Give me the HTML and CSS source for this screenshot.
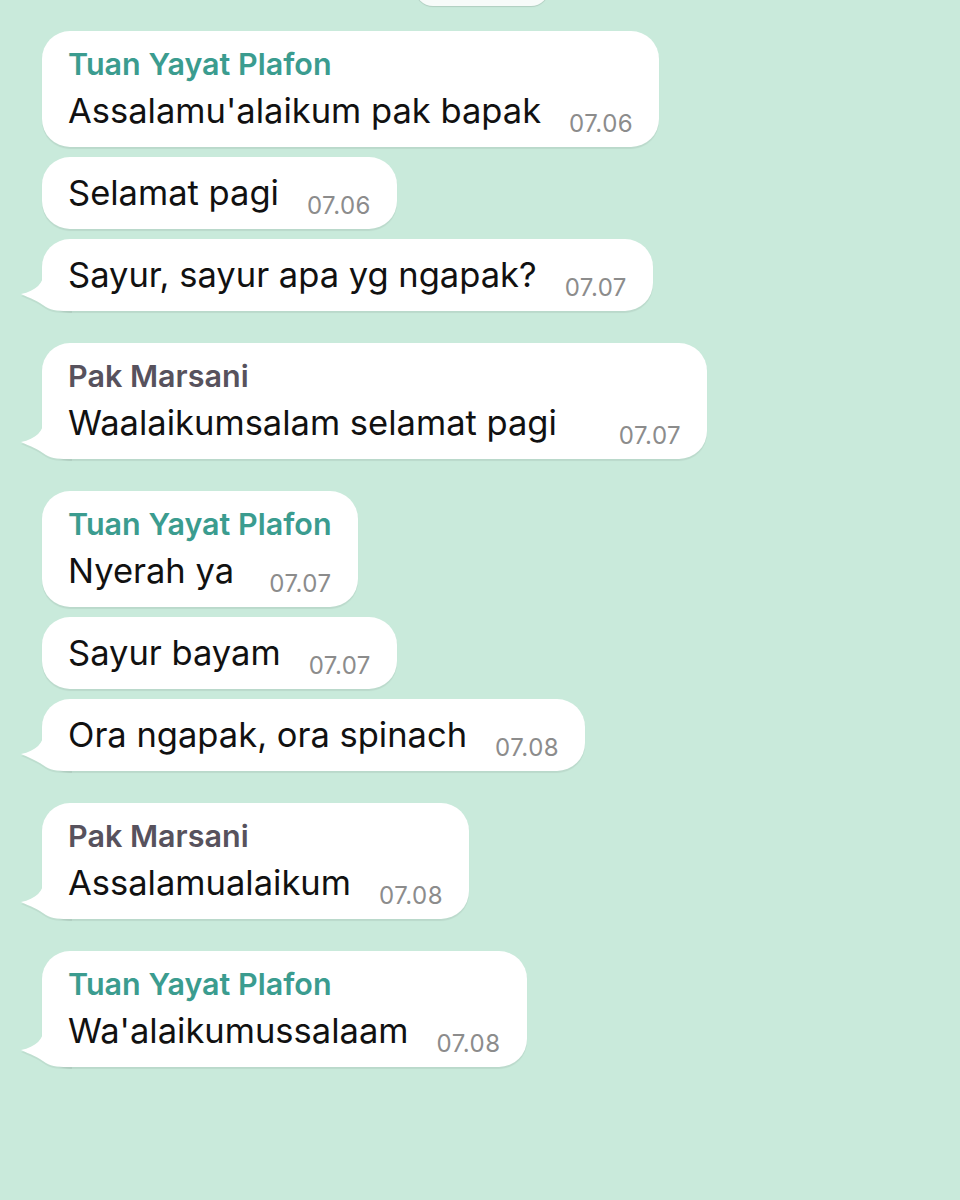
FILE: index.html
```html
<!DOCTYPE html>
<html>
  <head>
    <title>Chat</title>
    <link rel="stylesheet" href="styles.css">
  </head>
  <body>
    <div class="chat">
      <div class="date-pill"></div>

      <div class="group">
        <div class="bubble">
          <div class="name name-teal">Tuan Yayat Plafon</div>
          <div class="line"><span class="text">Assalamu'alaikum pak bapak</span><span class="time">07.06</span></div>
        </div>
        <div class="bubble">
          <div class="line"><span class="text">Selamat pagi</span><span class="time">07.06</span></div>
        </div>
        <div class="bubble tail">
          <svg class="tail-icon" width="52" height="40" viewBox="0 0 52 40"><path d="M24 0 C24 12 16 20 1 23 C10 27 18 30 26 36 C32 40 40 40 52 40 L52 0 Z" fill="#fff"/></svg>
          <div class="line"><span class="text">Sayur, sayur apa yg ngapak?</span><span class="time">07.07</span></div>
        </div>
      </div>

      <div class="group">
        <div class="bubble tail">
          <svg class="tail-icon" width="52" height="40" viewBox="0 0 52 40"><path d="M24 0 C24 12 16 20 1 23 C10 27 18 30 26 36 C32 40 40 40 52 40 L52 0 Z" fill="#fff"/></svg>
          <div class="name name-grey">Pak Marsani</div>
          <div class="line line-wide"><span class="text">Waalaikumsalam selamat pagi</span><span class="time">07.07</span></div>
        </div>
      </div>

      <div class="group">
        <div class="bubble">
          <div class="name name-teal">Tuan Yayat Plafon</div>
          <div class="line"><span class="text">Nyerah ya</span><span class="time">07.07</span></div>
        </div>
        <div class="bubble">
          <div class="line"><span class="text">Sayur bayam</span><span class="time">07.07</span></div>
        </div>
        <div class="bubble tail">
          <svg class="tail-icon" width="52" height="40" viewBox="0 0 52 40"><path d="M24 0 C24 12 16 20 1 23 C10 27 18 30 26 36 C32 40 40 40 52 40 L52 0 Z" fill="#fff"/></svg>
          <div class="line"><span class="text">Ora ngapak, ora spinach</span><span class="time">07.08</span></div>
        </div>
      </div>

      <div class="group">
        <div class="bubble tail">
          <svg class="tail-icon" width="52" height="40" viewBox="0 0 52 40"><path d="M24 0 C24 12 16 20 1 23 C10 27 18 30 26 36 C32 40 40 40 52 40 L52 0 Z" fill="#fff"/></svg>
          <div class="name name-grey">Pak Marsani</div>
          <div class="line"><span class="text">Assalamualaikum</span><span class="time">07.08</span></div>
        </div>
      </div>

      <div class="group">
        <div class="bubble tail">
          <svg class="tail-icon" width="52" height="40" viewBox="0 0 52 40"><path d="M24 0 C24 12 16 20 1 23 C10 27 18 30 26 36 C32 40 40 40 52 40 L52 0 Z" fill="#fff"/></svg>
          <div class="name name-teal">Tuan Yayat Plafon</div>
          <div class="line"><span class="text">Wa'alaikumussalaam</span><span class="time">07.08</span></div>
        </div>
      </div>
    </div>
  </body>
</html>
```

FILE: styles.css
```css
* {
  margin: 0;
  padding: 0;
  box-sizing: border-box;
}

html,
body {
  width: 960px;
  height: 1200px;
  overflow: hidden;
}

body {
  background-color: #c9eadb;
  font-family: Inter, Roboto, "Liberation Sans", sans-serif;
  color: #111;
}

.chat {
  display: flex;
  flex-direction: column;
  align-items: flex-start;
  gap: 32px;
  padding: 0 0 0 42px;
}

.date-pill {
  align-self: flex-start;
  margin-left: 373px;
  width: 134px;
  height: 36px;
  margin-top: -30px;
  margin-bottom: -7px;
  background-color: #f7fbf9;
  border-radius: 18px;
  box-shadow: 0 1px 1px rgba(0, 0, 0, 0.12);
}

.group {
  display: flex;
  flex-direction: column;
  align-items: flex-start;
  gap: 10px;
}

.bubble {
  position: relative;
  background-color: #fff;
  border-radius: 28px;
  padding: 14px 26px;
  box-shadow: 0 2px 1px rgba(0, 0, 0, 0.07);
}

.name {
  position: relative;
  font-size: 30.5px;
  font-weight: 600;
  line-height: 38px;
  margin-bottom: 6px;
}

.name-teal {
  color: #3b9c8f;
}

.name-grey {
  color: #57525d;
}

.line {
  position: relative;
  display: flex;
  justify-content: space-between;
  align-items: baseline;
  gap: 28px;
}

.line-wide {
  gap: 62px;
}

.text {
  font-size: 34.5px;
  line-height: 44px;
  white-space: nowrap;
}

.time {
  font-size: 24px;
  color: #8c8c8c;
  position: relative;
  top: 9px;
  letter-spacing: 0.5px;
}

.tail-icon {
  position: absolute;
  left: -22px;
  bottom: 0;
  filter: drop-shadow(0 2px 0 rgba(0, 0, 0, 0.05));
}
```
